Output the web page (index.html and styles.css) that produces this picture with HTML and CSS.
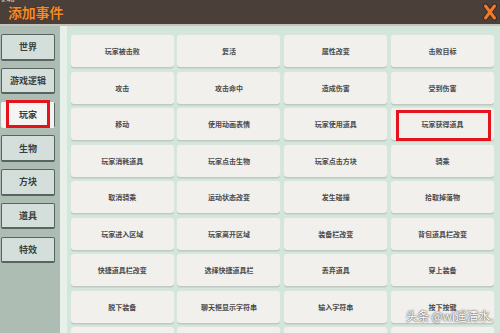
FILE: index.html
```html
<!DOCTYPE html>
<html lang="zh-CN">
<head>
<meta charset="utf-8">
<link rel="stylesheet" href="styles.css">
</head>
<body>
<div class="app">
  <header class="header">
    <span class="status">9:48</span>
    <h1 class="title">添加事件</h1>
    <svg class="close" width="14" height="18" viewBox="0 0 14 18">
      <path d="M2.5 3 L11.5 15 M11.5 3 L2.5 15" stroke="#3a2a20" stroke-width="5" stroke-linecap="round"/>
      <path d="M2.5 3 L11.5 15 M11.5 3 L2.5 15" stroke="#f07a2a" stroke-width="3" stroke-linecap="round"/>
    </svg>
  </header>
  <div class="main">
    <nav class="sidebar">
      <div class="tab">世界</div>
      <div class="tab">游戏逻辑</div>
      <div class="tab active">玩家<span class="mark"></span></div>
      <div class="tab">生物</div>
      <div class="tab">方块</div>
      <div class="tab">道具</div>
      <div class="tab">特效</div>
    </nav>
    <section class="content">
      <div class="grid">
        <div class="cell">玩家被击败</div>
        <div class="cell">复活</div>
        <div class="cell">属性改变</div>
        <div class="cell">击败目标</div>
        <div class="cell">攻击</div>
        <div class="cell">攻击命中</div>
        <div class="cell">造成伤害</div>
        <div class="cell">受到伤害</div>
        <div class="cell">移动</div>
        <div class="cell">使用动画表情</div>
        <div class="cell">玩家使用道具</div>
        <div class="cell marked">玩家获得道具<span class="mark"></span></div>
        <div class="cell">玩家消耗道具</div>
        <div class="cell">玩家点击生物</div>
        <div class="cell">玩家点击方块</div>
        <div class="cell">骑乘</div>
        <div class="cell">取消骑乘</div>
        <div class="cell">运动状态改变</div>
        <div class="cell">发生碰撞</div>
        <div class="cell">拾取掉落物</div>
        <div class="cell">玩家进入区域</div>
        <div class="cell">玩家离开区域</div>
        <div class="cell">装备栏改变</div>
        <div class="cell">背包道具栏改变</div>
        <div class="cell">快捷道具栏改变</div>
        <div class="cell">选择快捷道具栏</div>
        <div class="cell">丢弃道具</div>
        <div class="cell">穿上装备</div>
        <div class="cell">脱下装备</div>
        <div class="cell">聊天框显示字符串</div>
        <div class="cell">输入字符串</div>
        <div class="cell">按下按键</div>
        <div class="cell"></div>
        <div class="cell"></div>
        <div class="cell"></div>
        <div class="cell"></div>
      </div>
      <div class="watermark">头条 @wi遥清水.</div>
    </section>
  </div>
</div>
</body>
</html>
```
FILE: styles.css
```css
* { box-sizing: border-box; margin: 0; padding: 0; }
html, body { width: 500px; height: 333px; overflow: hidden; }
body {
  font-family: "Noto Sans CJK SC", "Noto Sans", sans-serif;
  background: #d3e6db;
}
.app { width: 500px; height: 333px; display: flex; flex-direction: column; }
.header {
  position: relative;
  height: 26px;
  flex: none;
  background: #4a4039;
  border-bottom: 2px solid #c9c2ba;
  display: flex;
  align-items: center;
  justify-content: space-between;
  padding: 0 3px 1px 8px;
}
.status {
  position: absolute;
  left: 1px;
  top: -4px;
  font-size: 6px;
  color: #d8d8d8;
  font-family: "DejaVu Sans", sans-serif;
}
.title {
  font-size: 14px;
  line-height: 16px;
  font-weight: 700;
  color: #f2892a;
  letter-spacing: -0.2px;
  text-shadow: 0 0 1px #2a1a10;
}
.close { display: block; }
.main { flex: 1; display: flex; min-height: 0; }
.sidebar {
  width: 60px;
  flex: none;
  background: #adbdb3;
  padding: 8px 5px 0 1px;
  display: flex;
  flex-direction: column;
  gap: 7.3px;
}
.tab {
  position: relative;
  height: 26.5px;
  background: #d4dfdc;
  border: 1px solid #58645f;
  border-bottom-width: 2px;
  border-radius: 2px;
  display: flex;
  align-items: center;
  justify-content: center;
  font-size: 9px;
  font-weight: 700;
  color: #3a3f3d;
}
.tab.active {
  background: #f4f4f2;
  border-color: #f4f4f2;
  border-right-color: #58645f;
}
.mark {
  position: absolute;
  border: 3px solid #e3141c;
}
.tab .mark { left: 4px; right: 4px; top: -3px; bottom: -2px; }
.content {
  position: relative;
  flex: 1;
  border-left: 7px solid #e7f0eb;
  background: #d3e6db;
  padding: 9px 0 0 3.7px;
  overflow: hidden;
}
.grid {
  display: grid;
  grid-template-columns: repeat(4, 103px);
  grid-auto-rows: 32px;
  column-gap: 3.8px;
  row-gap: 4.5px;
}
.cell {
  position: relative;
  background: #f1f0ed;
  border-radius: 3px;
  box-shadow: 0 1.5px 0 #bfc8c1, 0 0 0 0.5px #dfe6e1;
  display: flex;
  align-items: center;
  justify-content: center;
  font-size: 7px;
  font-weight: 700;
  color: #4a4a4a;
}
.cell .mark { left: 5px; right: 3px; top: 1.5px; bottom: -1px; }
.watermark {
  position: absolute;
  right: 7px;
  bottom: 10px;
  font-size: 12px;
  line-height: 14px;
  color: #ffffff;
  text-shadow: 0 0 2px #555, 0 0 1px #444;
  letter-spacing: -0.3px;
}
```
